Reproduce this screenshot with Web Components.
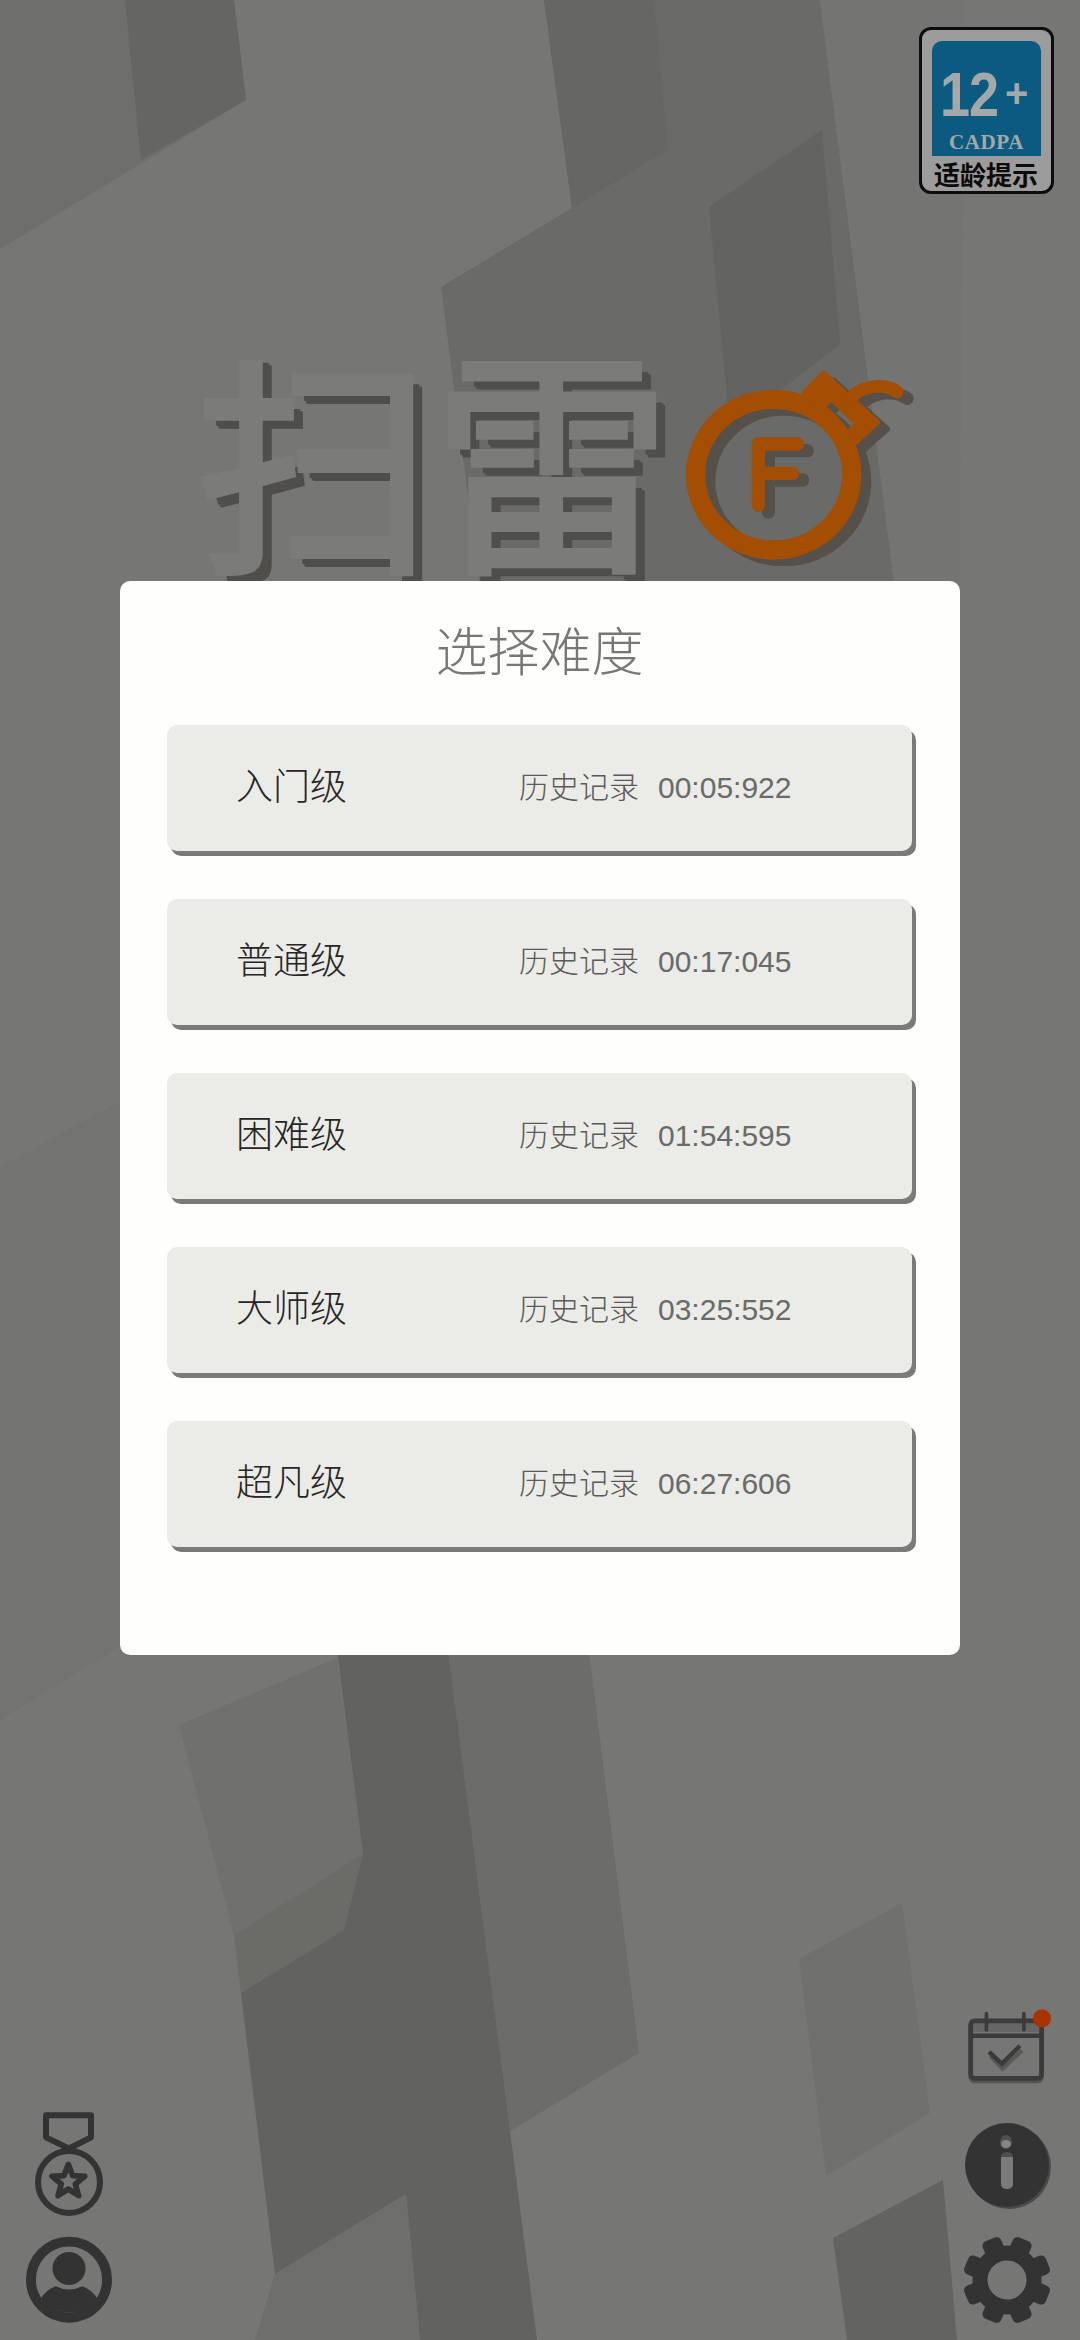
<!doctype html>
<html lang="zh">
<head>
<meta charset="UTF-8">
<title>扫雷</title>
<style>
html, body { margin: 0; padding: 0; background: #757573; }
</style>
</head>
<body>
<game-screen>
    <age-badge slot="badge"></age-badge>
    <game-logo slot="logo"></game-logo>
    <level-dialog slot="dialog" heading="选择难度">
        <level-row><span slot="name">入门级</span><span slot="time">00:05:922</span></level-row>
        <level-row><span slot="name">普通级</span><span slot="time">00:17:045</span></level-row>
        <level-row><span slot="name">困难级</span><span slot="time">01:54:595</span></level-row>
        <level-row><span slot="name">大师级</span><span slot="time">03:25:552</span></level-row>
        <level-row><span slot="name">超凡级</span><span slot="time">06:27:606</span></level-row>
    </level-dialog>
    <left-tools slot="left"></left-tools>
    <right-tools slot="right"></right-tools>
</game-screen>

<script type="text/javascript">
    const FONT = `"Liberation Sans", "Noto Sans CJK SC", sans-serif`

    // 背景的灰色块, 只是一张画布
    class FacetBackground extends HTMLElement {
        constructor () {
            super()
            const facets = [
                ['#6e6e6c', '0,0 234,0 246,100 0,249'],
                ['#656563', '125,0 234,0 246,100 141,160'],
                ['#6a6a68', '544,0 820,0 895,590 480,590 441,287 572,208'],
                ['#666664', '544,0 654,0 668,150 572,208'],
                ['#636361', '709,207 822,130 840,344 730,430'],
                ['#747472', '820,0 964,0 960,590 895,590'],
                ['#737371', '0,1167 130,1096 130,1640 0,1720'],
                ['#70706e', '179,1725 337,1658 363,1854 234,1935'],
                ['#6c6c6a', '448,1650 589,1650 639,2053 510,2131'],
                ['#6b6b68', '234,1935 363,1854 344,1930 241,1993'],
                ['#626260', '337,1650 448,1650 537,2340 420,2340 406,2194 275,2274 241,1993 344,1930 363,1854'],
                ['#6e6e6c', '275,2274 406,2194 420,2340 255,2340'],
                ['#70706e', '799,1959 902,1903 930,2113 826,2176'],
                ['#636361', '833,2238 943,2180 957,2340 847,2340'],
            ]
            const polys = facets.map(([c, p]) => `<polygon fill="${c}" points="${p}"/>`).join('')
            this.attachShadow({mode: 'open'}).innerHTML = `
            <style>
            :host { display: block; position: absolute; inset: 0; background: #767674; }
            svg { display: block; }
            </style>
            <svg width="1080" height="2340" viewBox="0 0 1080 2340">${polys}</svg>`
        }
    }
    customElements.define('facet-background', FacetBackground)

    class GameScreen extends HTMLElement {
        constructor () {
            super()
            this.attachShadow({mode: 'open'}).innerHTML = `
            <style>
            :host {
                display: block;
                position: relative;
                width: 1080px;
                height: 2340px;
                overflow: hidden;
                font-family: ${FONT};
            }
            .page { position: relative; display: flex; flex-direction: column; height: 100%; }
            .top { display: flex; justify-content: flex-end; padding: 27px 26px 0 0; height: 167px; }
            .logo { margin-top: 166px; height: 221px; overflow: hidden; }
            .dialog { padding: 0 120px; }
            .tools {
                flex: 1;
                display: flex;
                justify-content: space-between;
                align-items: flex-end;
                padding: 0 28px 16px 25px;
            }
            </style>
            <facet-background></facet-background>
            <div class="page">
                <div class="top"><slot name="badge"></slot></div>
                <div class="logo"><slot name="logo"></slot></div>
                <div class="dialog"><slot name="dialog"></slot></div>
                <div class="tools"><slot name="left"></slot><slot name="right"></slot></div>
            </div>`
        }
    }
    customElements.define('game-screen', GameScreen)

    // 适龄提示
    class AgeBadge extends HTMLElement {
        constructor () {
            super()
            this.attachShadow({mode: 'open'}).innerHTML = `
            <style>
            :host {
                display: flex;
                flex-direction: column;
                box-sizing: border-box;
                width: 135px;
                height: 167px;
                padding: 11px 10px 0;
                background: #9c9c9c;
                border: 3px solid #0d0d0d;
                border-radius: 12px;
            }
            .blue {
                position: relative;
                height: 115px;
                background: #0b5a80;
                border-radius: 10px 10px 0 0;
                color: #a4a8aa;
            }
            .age {
                position: absolute;
                left: 8px;
                top: 22px;
                font: 700 54px/1 "Liberation Sans", sans-serif;
                transform: scaleY(1.16);
                transform-origin: 0 0;
                letter-spacing: -1px;
            }
            .plus { position: absolute; left: 73px; top: 32px; font: 700 40px/1 "Liberation Sans", sans-serif; }
            .org {
                position: absolute;
                left: 0; right: 0;
                bottom: 3px;
                text-align: center;
                font: 700 21px/1 "Liberation Serif", serif;
                letter-spacing: .6px;
            }
            .tip {
                margin-top: 3px;
                margin-left: 2px;
                white-space: nowrap;
                color: #0b0b0b;
                font: 700 26px/30px "Noto Sans CJK SC", sans-serif;
            }
            </style>
            <div class="blue">
                <span class="age">12</span><span class="plus">+</span>
                <span class="org">CADPA</span>
            </div>
            <div class="tip">适龄提示</div>`
        }
    }
    customElements.define('age-badge', AgeBadge)

    class GameLogo extends HTMLElement {
        constructor () {
            super()
            this.attachShadow({mode: 'open'}).innerHTML = `
            <style>
            :host { display: flex; align-items: flex-start; height: 221px; padding-left: 195px; }
            .name {
                width: 475px;
                height: 190px;
                flex: none;
                margin-top: 17px;
                white-space: nowrap;
                color: #7b7b7a;
                font: 400 238px/190px ${FONT};
                -webkit-text-stroke: 6px #7b7b7a;
                text-shadow: 11px 10px 0 #4f4e4a, 9px 8px 0 #4f4e4a, 12px 11px 0 #4f4e4a;
            }
            svg { flex: none; margin-top: -2px; display: block; }
            </style>
            <div class="name">扫雷</div>
            <svg width="260" height="220" viewBox="0 0 780 660">
                <defs>
                    <g id="bomb">
                        <ellipse cx="311" cy="350" rx="234" ry="226" fill="none" stroke-width="58" stroke="currentColor"/>
                        <path fill-rule="evenodd" fill="currentColor" stroke="currentColor" stroke-width="14" stroke-linejoin="round"
                              d="M461 45 L402 104 L556 254 L624 193 Z M482 122 L560 197 L532 224 L458 148 Z"/>
                        <path d="M545 115 C 590 78, 650 78, 682 102" fill="none" stroke="currentColor" stroke-width="38" stroke-linecap="round"/>
                        <path d="M265 442 V258 H382 M265 346 H368" fill="none" stroke="currentColor" stroke-width="40" stroke-linecap="round" stroke-linejoin="round"/>
                    </g>
                </defs>
                <use href="#bomb" x="30" y="20" color="#55504a"/>
                <use href="#bomb" color="#a34e03"/>
            </svg>`
        }
    }
    customElements.define('game-logo', GameLogo)

    class LevelDialog extends HTMLElement {
        constructor () {
            super()
            const heading = this.getAttribute('heading')
            this.attachShadow({mode: 'open'}).innerHTML = `
            <style>
            :host {
                display: block;
                box-sizing: border-box;
                height: 1074px;
                padding: 0 48px 0 47px;
                background: #fefefc;
                border-radius: 10px;
            }
            h2 {
                margin: 0;
                height: 144px;
                text-align: center;
                color: #777775;
                font: 300 52px/144px ${FONT};
            }
            .rows { display: flex; flex-direction: column; gap: 48px; }
            </style>
            <h2>${heading}</h2>
            <div class="rows"><slot></slot></div>`
        }
    }
    customElements.define('level-dialog', LevelDialog)

    class LevelRow extends HTMLElement {
        constructor () {
            super()
            this.attachShadow({mode: 'open'}).innerHTML = `
            <style>
            :host {
                display: flex;
                align-items: center;
                height: 126px;
                padding-left: 69px;
                background: #ebebe8;
                border-radius: 10px;
                box-shadow: 4px 5px 0 #7a7a78;
            }
            .name { width: 283px; color: #262624; font: 300 37px/1 ${FONT}; margin-top: -1px; }
            .label { color: #5a5a58; font: 300 30px/1 ${FONT}; width: 139px; }
            .time { color: #6a6a68; font: 400 30px/1 ${FONT}; }
            </style>
            <div class="name"><slot name="name"></slot></div>
            <div class="label">历史记录</div>
            <div class="time"><slot name="time"></slot></div>`
        }
    }
    customElements.define('level-row', LevelRow)

    class LeftTools extends HTMLElement {
        constructor () {
            super()
            this.attachShadow({mode: 'open'}).innerHTML = `
            <style>
            :host { display: flex; flex-direction: column; align-items: center; gap: 20px; }
            svg { display: block; }
            </style>
            <svg width="70" height="104" viewBox="100 66 210 312">
                <g fill="none" stroke="#333" stroke-width="18" stroke-linejoin="round">
                    <path d="M226 186 L136 142 V76 H271 V142 L184 186"/>
                    <circle cx="205" cy="276" r="93"/>
                    <polygon stroke-width="17" points="203,223 216,257 252,259 224,282 234,317 203,297 172,317 182,282 154,259 190,257"/>
                </g>
            </svg>
            <svg width="88" height="88" viewBox="72 440 266 266">
                <circle cx="205" cy="572" r="115" fill="none" stroke="#333" stroke-width="30"/>
                <circle cx="205" cy="538" r="50" fill="#333"/>
                <path fill="#333" d="M118 632 Q135 602 165 592 Q205 612 245 592 Q275 602 292 632 A115 115 0 0 1 118 632 Z"/>
            </svg>`
        }
    }
    customElements.define('left-tools', LeftTools)

    class RightTools extends HTMLElement {
        constructor () {
            super()
            const teeth = [0, 1, 2, 3, 4, 5, 6, 7].map(i =>
                `<rect x="-10" y="-44" width="20" height="20" rx="5" transform="rotate(${22.5 + i * 45})"/>`).join('')
            this.attachShadow({mode: 'open'}).innerHTML = `
            <style>
            :host { display: flex; flex-direction: column; align-items: center; }
            svg { display: block; }
            .cal { margin-bottom: 36px; align-self: flex-end; }
            .info { margin-bottom: 26px; }
            </style>
            <svg class="cal" width="87" height="77" viewBox="80 60 260 230">
                <rect x="97" y="103" width="212" height="172" rx="12" fill="none" stroke="#555553" stroke-width="14"/>
                <path d="M100 116 H306" stroke="#666664" stroke-width="26"/>
                <rect x="97" y="95" width="212" height="172" rx="12" fill="none" stroke="#3b3b3b" stroke-width="14"/>
                <path d="M100 140 H306" stroke="#3b3b3b" stroke-width="13"/>
                <path d="M144 74 V122 M256 74 V122" stroke="#3b3b3b" stroke-width="11" stroke-linecap="round"/>
                <path d="M156 200 L192 238 L250 184" fill="none" stroke="#595957" stroke-width="13"/>
                <path d="M152 188 L190 224 L244 170" fill="none" stroke="#3b3b3b" stroke-width="13"/>
                <circle cx="310" cy="88" r="27" fill="#a83200"/>
            </svg>
            <svg class="info" width="90" height="88" viewBox="-45 -43 90 88">
                <circle cx="2" cy="2" r="42" fill="#4a4a49"/>
                <circle r="42" fill="#333"/>
                <ellipse cx="-1" cy="-23" rx="6" ry="7" fill="#4f4f4e"/>
                <ellipse cx="-1" cy="-21" rx="5" ry="4" fill="#858583"/>
                <rect x="-6" y="-12" width="12" height="36" rx="5" fill="#7b7b79"/>
                <path d="M-6 -8 a6 5 0 0 1 12 0 z" fill="#4f4f4e"/>
            </svg>
            <svg width="88" height="88" viewBox="-44 -44 88 88">
                <g fill="#333">${teeth}</g>
                <circle r="27" fill="none" stroke="#333" stroke-width="15"/>
            </svg>`
        }
    }
    customElements.define('right-tools', RightTools)
</script>
</body>
</html>
